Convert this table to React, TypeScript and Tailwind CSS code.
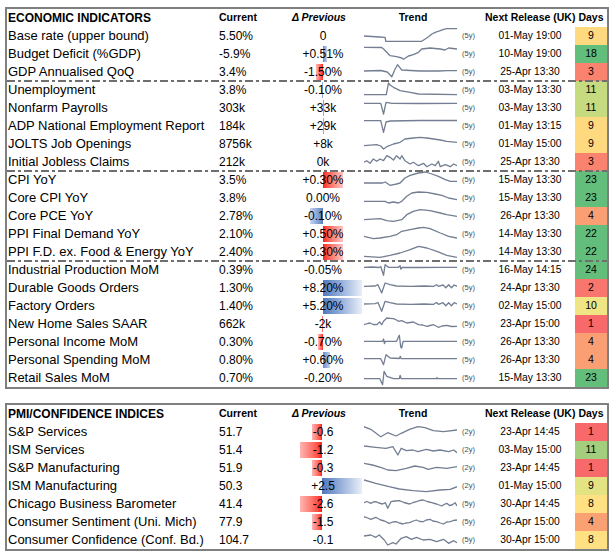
import React from 'react';

type Bar = { w: number; c: 'r' | 'b' };
type Row = {
  name: string;
  cur: string;
  delta: string;
  bar?: Bar;
  spark: number[];
  span: string;
  rel: string;
  days: number;
  tone: string;
  sep?: boolean;
};

const econ: Row[] = [
  { name: 'Base rate (upper bound)', cur: '5.50%', delta: '0', span: '5y', rel: '01-May 19:00', days: 9, tone: 'bg-[#fed980]',
    spark: [0,9, 17,10, 22.7,10.3, 23.4,14.3, 62,14.3, 65.8,12, 69.4,9.7, 73,7, 76.6,5.3, 82,3.7, 85.6,2.3, 89,1.7, 100,1.7] },
  { name: 'Budget Deficit (%GDP)', cur: '-5.9%', delta: '+0.51%', bar: { w: 4, c: 'b' }, span: '5y', rel: '10-May 19:00', days: 18, tone: 'bg-[#63be7b]',
    spark: [0,2.3, 19,2.5, 21,4, 24.5,7.3, 28,10.7, 35,11.7, 40.6,13, 42.4,14.3, 47.8,11, 53,9.7, 58.6,7.3, 62,4, 71,3, 82,4, 87,5, 91,3, 100,4] },
  { name: 'GDP Annualised QoQ', cur: '3.4%', delta: '-1.50%', bar: { w: -7, c: 'r' }, span: '5y', rel: '25-Apr 13:30', days: 3, tone: 'bg-[#f9836f]',
    spark: [0,8, 18,7.5, 25,9, 29.9,13.7, 33,7, 36,1.7, 40.6,7, 50,7.5, 60,8, 70,7.8, 80,8, 90,7.6, 100,7.7] },
  { name: 'Unemployment', cur: '3.8%', delta: '-0.10%', bar: { w: -1, c: 'b' }, span: '5y', rel: '03-May 13:30', days: 11, tone: 'bg-[#c6da80]', sep: true,
    spark: [0,13.7, 24,13.7, 26.3,2, 28,4, 31.7,6.3, 38.8,9.7, 49.6,11.3, 58.6,13, 100,13.7] },
  { name: 'Nonfarm Payrolls', cur: '303k', delta: '+33k', bar: { w: 1, c: 'r' }, span: '5y', rel: '03-May 13:30', days: 11, tone: 'bg-[#c6da80]',
    spark: [0,4.3, 18,4.3, 21,15, 23.7,3.3, 30,4.3, 60,4.5, 100,4.3] },
  { name: 'ADP National Employment Report', cur: '184k', delta: '+29k', bar: { w: 1, c: 'r' }, span: '5y', rel: '01-May 13:15', days: 9, tone: 'bg-[#fed980]',
    spark: [0,3.7, 18,3.7, 21,15.3, 23.7,5, 28,4, 60,3.5, 100,3.5] },
  { name: 'JOLTS Job Openings', cur: '8756k', delta: '+8k', span: '5y', rel: '01-May 15:00', days: 9, tone: 'bg-[#fed980]',
    spark: [0,10.7, 13.7,9.7, 18,11, 21,14, 24.5,11.7, 31.7,9, 38.8,7.3, 44,4, 53,3, 60,2.3, 67.6,3, 74.8,4, 82,5, 89,6.3, 100,7.3] },
  { name: 'Initial Jobless Claims', cur: '212k', delta: '0k', span: '5y', rel: '25-Apr 13:30', days: 3, tone: 'bg-[#f9836f]',
    spark: [0,9.3, 2.9,7.7, 6.5,10.3, 10,6, 13.7,8.3, 17.3,6, 21,7.7, 24.5,2.7, 28,4.3, 31.7,7, 35,2.7, 38.8,6, 40.6,2.7, 44,7.7, 49.6,11, 53,9.3, 58.6,12.7, 64,10.3, 67.6,13.7, 73,11, 76.6,12.7, 80,8.3, 82,13.7, 87.4,11.7, 92.8,13.7, 96.4,11, 100,12.7] },
  { name: 'CPI YoY', cur: '3.5%', delta: '+0.30%', bar: { w: 20, c: 'r' }, span: '5y', rel: '15-May 13:30', days: 23, tone: 'bg-[#63be7b]', sep: true,
    spark: [0,12, 20,12, 22.7,11, 28,14.3, 35,13, 38.8,12, 44,7, 49.6,4.3, 58.6,2, 66,1, 73,3, 80,5.3, 87.4,8.7, 93,10.3, 100,10.3] },
  { name: 'Core CPI YoY', cur: '3.8%', delta: '0.00%', span: '5y', rel: '15-May 13:30', days: 23, tone: 'bg-[#63be7b]',
    spark: [0,12.3, 22.7,12.3, 26.3,14, 31.7,13, 37,14, 40.6,12.3, 46,7.3, 51.4,4, 58.6,3, 67.6,3.3, 76.6,5, 83.8,6.3, 91,9, 100,10.7] },
  { name: 'Core PCE YoY', cur: '2.78%', delta: '-0.10%', bar: { w: -13, c: 'b' }, span: '5y', rel: '26-Apr 13:30', days: 4, tone: 'bg-[#fa9f74]',
    spark: [0,12.7, 17.3,11.7, 24.5,13.7, 31.7,14.3, 40.6,12.7, 46,7.7, 53,4.3, 60.4,2.7, 71,3.7, 82,6, 89,7.7, 100,9.3] },
  { name: 'PPI Final Demand YoY', cur: '2.10%', delta: '+0.50%', bar: { w: 20, c: 'r' }, span: '5y', rel: '14-May 13:30', days: 22, tone: 'bg-[#63be7b]',
    spark: [0,11.3, 10,13.7, 17.3,13, 28,11.3, 35,9.7, 40.6,6.3, 49.6,4.7, 58.6,3, 64,2.3, 71,3.7, 82,8, 91,11.3, 100,13] },
  { name: 'PPI F.D. ex. Food & Energy YoY', cur: '2.40%', delta: '+0.30%', bar: { w: 20, c: 'r' }, span: '5y', rel: '14-May 13:30', days: 22, tone: 'bg-[#63be7b]',
    spark: [0,13.3, 17.3,14.3, 28,12.3, 38.8,10, 49.6,6.7, 58.6,3.3, 67.6,5, 78.4,8.3, 89,12.3, 100,14.3] },
  { name: 'Industrial Production MoM', cur: '0.39%', delta: '-0.05%', span: '5y', rel: '16-May 14:15', days: 24, tone: 'bg-[#63be7b]', sep: true,
    spark: [0,6.3, 8,6, 16,6.5, 18,5.5, 21,14.3, 22.7,3.7, 26.3,6.3, 37,6.3, 38.8,4.7, 39.6,8, 41,6.3, 60,6.5, 80,6.3, 100,6.3] },
  { name: 'Durable Goods Orders', cur: '1.30%', delta: '+8.20%', bar: { w: 39, c: 'b' }, span: '5y', rel: '24-Apr 13:30', days: 2, tone: 'bg-[#f8766e]',
    spark: [0,7.3, 12,7, 15,5.7, 19,14, 22.7,4, 28,5.7, 35,7, 50,7.3, 65,7, 75,7.3, 78,5.7, 80,7.3, 85,6, 88,8.7, 91,5.7, 94,8.7, 97,6, 100,7.3] },
  { name: 'Factory Orders', cur: '1.40%', delta: '+5.20%', bar: { w: 39, c: 'b' }, span: '5y', rel: '02-May 15:00', days: 10, tone: 'bg-[#efe584]',
    spark: [0,7, 12,6.7, 15,5.5, 19,14.3, 22.7,4.3, 28,5.7, 35,7, 50,7.3, 65,7, 75,7.3, 78,5.5, 80,7.3, 85,5.7, 88,8.7, 91,5.7, 94,8.7, 97,5.7, 100,7] },
  { name: 'New Home Sales SAAR', cur: '662k', delta: '-2k', bar: { w: -1, c: 'r' }, span: '5y', rel: '23-Apr 15:00', days: 1, tone: 'bg-[#f8696b]',
    spark: [0,9.7, 4,8.5, 6.5,8, 10,9.5, 13.7,9.7, 17,7, 19,9.7, 21,6.3, 24.5,3, 28,3.3, 31.7,3.7, 35,5, 37,6.3, 40.6,5.7, 46,8, 53,7, 58.6,9.7, 63,10, 67.6,11.3, 71,10.5, 74.8,9.7, 80,12.3, 84,11, 89,10.3, 94,11.5, 100,11.3] },
  { name: 'Personal Income MoM', cur: '0.30%', delta: '-0.70%', bar: { w: -5, c: 'r' }, span: '5y', rel: '26-Apr 13:30', days: 4, tone: 'bg-[#fa9f74]',
    spark: [0,8.3, 20,8.3, 21,6, 22,10.5, 23,8.3, 35,8.3, 37,4, 38,2.3, 39.5,14, 40.5,15, 42,8.3, 100,8.3] },
  { name: 'Personal Spending MoM', cur: '0.80%', delta: '+0.60%', bar: { w: 7, c: 'b' }, span: '5y', rel: '26-Apr 13:30', days: 4, tone: 'bg-[#fa9f74]',
    spark: [0,7.7, 18,7.7, 21,13.7, 23.7,3.7, 28,7, 38,7.5, 39,5.3, 40,7.7, 100,7.7] },
  { name: 'Retail Sales MoM', cur: '0.70%', delta: '-0.20%', span: '5y', rel: '15-May 13:30', days: 23, tone: 'bg-[#63be7b]',
    spark: [0,9.7, 17,9.7, 20,15.7, 21.6,2.3, 24.5,7.3, 31.7,9.7, 38,9.5, 38.8,6.3, 40,9.7, 78,9.7, 78.5,8.5, 79,9.7, 100,9.7] },
];

const pmi: Row[] = [
  { name: 'S&P Services', cur: '51.7', delta: '-0.6', bar: { w: -10, c: 'r' }, span: '2y', rel: '23-Apr 14:45', days: 1, tone: 'bg-[#f8696b]',
    spark: [0,3.7, 7.3,6.3, 18,13.7, 25.5,9.7, 34.5,13, 40,10.3, 49,6.3, 58,3.7, 65.5,4.7, 74.5,7.7, 85.5,8.7, 100,7] },
  { name: 'ISM Services', cur: '51.4', delta: '-1.2', bar: { w: -22, c: 'r' }, span: '2y', rel: '03-May 15:00', days: 11, tone: 'bg-[#a2ce7e]',
    spark: [0,5, 12.7,6.3, 23.6,7.3, 31,5.7, 36.4,14, 40,7.3, 45.5,9.7, 52.7,9, 58,10.7, 67,8.3, 74.5,10, 81.8,9, 91,10.7, 96.4,9, 100,11.7] },
  { name: 'S&P Manufacturing', cur: '51.9', delta: '-0.3', bar: { w: -10, c: 'r' }, span: '2y', rel: '23-Apr 14:45', days: 1, tone: 'bg-[#f8696b]',
    spark: [0,4.3, 9,6, 18,8.3, 25.5,11, 34.5,11.7, 45.5,9.3, 54.5,7, 63.6,8.3, 69,10.3, 78,8.3, 89,9.3, 100,7.7] },
  { name: 'ISM Manufacturing', cur: '50.3', delta: '+2.5', bar: { w: 40, c: 'b' }, span: '2y', rel: '01-May 15:00', days: 9, tone: 'bg-[#e4e383]',
    spark: [0,3, 12.7,6.3, 27,9.7, 38,12, 52.7,13.7, 67,14.7, 81.8,13, 92.7,12.3, 100,9.7] },
  { name: 'Chicago Business Barometer', cur: '41.4', delta: '-2.6', bar: { w: -22, c: 'r' }, span: '5y', rel: '30-Apr 14:45', days: 8, tone: 'bg-[#ffe183]',
    spark: [0,7.7, 3,6.5, 7.3,8.3, 10,7, 12.7,6.7, 16,8, 20,9, 23,7.7, 25.5,13.3, 29,6.7, 33,6, 38,5.7, 43,7.5, 49,9, 53,7.5, 56.4,6.7, 60,5.5, 63.6,5, 68,6.5, 72.7,7.7, 78,9, 83.6,11, 86,9.5, 89,8.3, 92,10.5, 94.5,10, 98,7.7, 100,11] },
  { name: 'Consumer Sentiment (Uni. Mich)', cur: '77.9', delta: '-1.5', bar: { w: -10, c: 'r' }, span: '5y', rel: '26-Apr 15:00', days: 4, tone: 'bg-[#f9a173]',
    spark: [0,3.7, 4,5, 7.3,6.3, 12.7,4.3, 18,7, 22,8, 27,10.3, 31,9, 34.5,8.7, 38,10, 41.8,11, 45,10, 49,9.7, 53,8, 56.4,7, 60,8.5, 63.6,8.7, 67,7, 71,6.3, 74,8, 78,8.7, 82,10, 85.5,11, 89,9, 92.7,8.7, 96,7.5, 100,7] },
  { name: 'Consumer Confidence (Conf. Bd.)', cur: '104.7', delta: '-0.1', span: '5y', rel: '30-Apr 15:00', days: 8, tone: 'bg-[#ffe183]',
    spark: [0,5, 7.3,4, 12.7,6.3, 16.4,4, 21.8,9, 25.5,14, 31,11.7, 34.5,13, 40,7.3, 45.5,5.7, 51,8.3, 56.4,6.3, 63.6,9, 71,8.3, 78,10.7, 85.5,8.3, 91,12.3, 96.4,9.7, 100,11.7] },
];

function Spark({ pts }: { pts: number[] }) {
  const points: string[] = [];
  for (let i = 0; i < pts.length; i += 2) points.push(`${pts[i]},${pts[i + 1]}`);
  return (
    <svg width={93} height={18} viewBox="0 0 100 18" preserveAspectRatio="none" className="shrink-0">
      <polyline
        points={points.join(' ')}
        fill="none"
        stroke="#737e92"
        strokeWidth={1.3}
        strokeLinejoin="round"
        vectorEffect="non-scaling-stroke"
      />
    </svg>
  );
}

function DataBar({ bar, axis }: { bar: Bar; axis: number }) {
  const pos = bar.w > 0;
  const long = Math.abs(bar.w) >= 30;
  let cls = '';
  if (bar.c === 'r') {
    if (pos) cls = 'bg-linear-to-r from-[#ff1717] to-[#ffc4c4]';
    else cls = long ? 'bg-linear-to-l from-[#ff1717] to-[#ffe8e8]' : 'bg-linear-to-l from-[#ff1717] to-[#ffb4b4]';
  } else {
    if (pos) cls = long ? 'bg-linear-to-r from-[#5078bd] to-[#eaeff8]' : 'bg-linear-to-r from-[#6a8cc8] to-[#c2d2ee]';
    else cls = 'bg-linear-to-l from-[#5a80c2] to-[#c6d5ef]';
  }
  const left = pos ? axis : axis + bar.w;
  return (
    <div
      className={`absolute top-[1px] bottom-[1px] ${cls}`}
      style={{ left, width: Math.abs(bar.w) }}
    />
  );
}

function TableRow({ r, axis }: { r: Row; axis: number }) {
  return (
    <div className="relative flex h-[18px] items-center">
      {r.sep && (
        <div className="absolute inset-x-0 -top-px z-10 h-[2px] bg-[repeating-linear-gradient(90deg,#6f6f6f_0_8px,transparent_8px_11px,#6f6f6f_11px_14px,transparent_14px_17px)]" />
      )}
      <div className="w-[210px] whitespace-nowrap pl-[1px] text-[13px]">{r.name}</div>
      <div className="w-[66px] pl-[2px] text-[12px]">{r.cur}</div>
      <div className="relative flex h-full w-[80px] items-center justify-center text-[12px]">
        {r.bar && <DataBar bar={r.bar} axis={axis} />}
        <span className="relative">{r.delta}</span>
      </div>
      <div className="flex h-full w-[122px] items-center pl-[1px]">
        <Spark pts={r.spark} />
        <span className="ml-[5px] text-[7.5px] text-[#4a4a4a]">({r.span})</span>
      </div>
      <div className="w-[90px] text-center text-[10.3px]">{r.rel}</div>
      <div className={`flex h-full w-[32px] items-center justify-center text-[10.5px] ${r.tone}`}>{r.days}</div>
    </div>
  );
}

function Table({ title, rows, axis }: { title: string; rows: Row[]; axis: number }) {
  return (
    <div className="w-[604px] border-2 border-[#7f7f7f] bg-white">
      <div className="flex h-[18px] items-center font-bold">
        <div className="w-[210px] whitespace-nowrap pl-[1px] text-[12px]">{title}</div>
        <div className="w-[66px] pl-[2px] text-[10.5px]">Current</div>
        <div className="w-[80px] pr-[8px] text-center text-[10.5px] italic">Δ Previous</div>
        <div className="w-[122px] pr-[22px] text-center text-[10.5px]">Trend</div>
        <div className="w-[90px] text-center text-[10.5px] whitespace-nowrap">Next Release (UK)</div>
        <div className="w-[32px] text-center text-[10.5px]">Days</div>
      </div>
      {rows.map((r) => (
        <TableRow key={r.name} r={r} axis={axis} />
      ))}
    </div>
  );
}

export default function App() {
  return (
    <div className="h-[553px] w-[613px] overflow-hidden bg-white pl-[5px] pt-[7px] font-['Liberation_Sans',Arial,sans-serif] text-black">
      <Table title="ECONOMIC INDICATORS" rows={econ} axis={40} />
      <div className="mt-[14px]">
        <Table title="PMI/CONFIDENCE INDICES" rows={pmi} axis={39} />
      </div>
    </div>
  );
}
